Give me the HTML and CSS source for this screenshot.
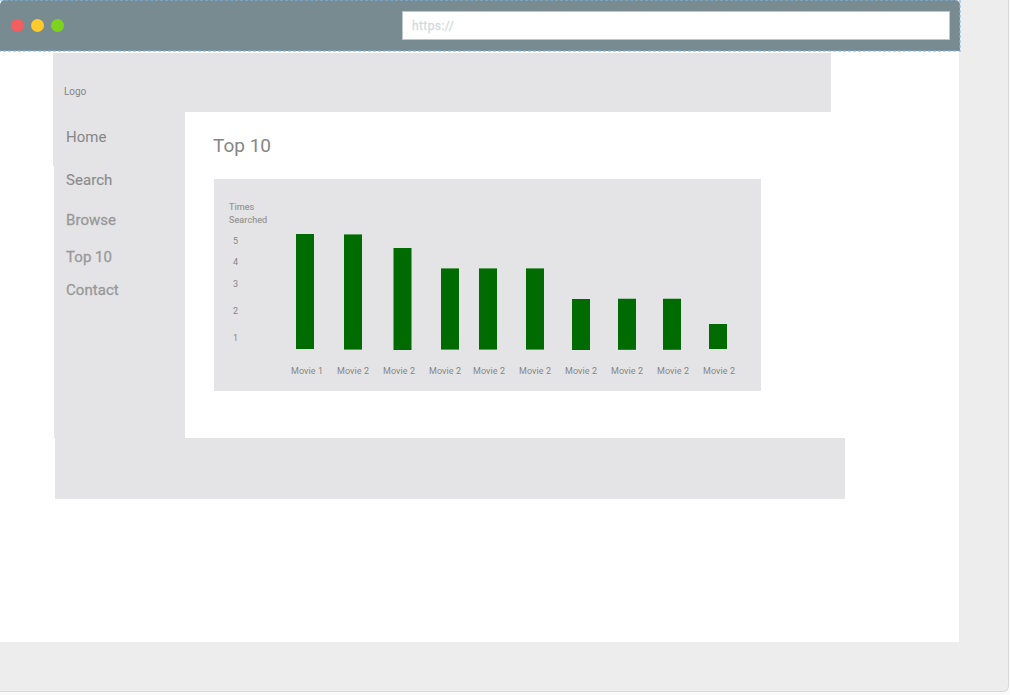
FILE: index.html
```html
<!DOCTYPE html>
<html lang="en">
<head>
<meta charset="utf-8">
<title>Top 10</title>
<link rel="stylesheet" href="styles.css">
</head>
<body>
<div class="canvas">
  <div class="page">
    <header class="browser">
      <div class="lights"><i class="red"></i><i class="yellow"></i><i class="green"></i></div>
      <div class="address">https://</div>
      <svg class="selection" width="962" height="52" viewBox="0 0 962 52"><path d="M0 0H960V51H0"/></svg>
    </header>
    <div class="site">
      <div class="banner"><span class="logo">Logo</span></div>
      <div class="middle">
        <nav class="sidebar">
          <a class="home">Home</a>
          <a class="search">Search</a>
          <a class="browse">Browse</a>
          <a class="top">Top 10</a>
          <a class="contact">Contact</a>
        </nav>
        <main class="content">
          <h1>Top 10</h1>
          <section class="chart">
            <div class="axis">
              <div class="caption">Times<br>Searched</div>
              <span class="n5">5</span><span class="n4">4</span><span class="n3">3</span><span class="n2">2</span><span class="n1">1</span>
            </div>
            <div class="plot">
              <div class="bars">
                <b class="b1"></b><b class="b2 soft"></b><b class="b3"></b><b class="b4 soft"></b><b class="b5 soft"></b><b class="b6 soft"></b><b class="b7"></b><b class="b8 faint"></b><b class="b9 faint"></b><b class="b10"></b>
              </div>
              <div class="labels">
                <span class="first">Movie 1</span><span>Movie 2</span><span>Movie 2</span><span class="narrow">Movie 2</span><span>Movie 2</span><span>Movie 2</span><span>Movie 2</span><span>Movie 2</span><span>Movie 2</span><span>Movie 2</span>
              </div>
            </div>
          </section>
        </main>
      </div>
      <footer class="footer"></footer>
    </div>
  </div>
</div>
</body>
</html>
```
FILE: styles.css
```css
* { box-sizing: border-box; }
body { margin: 0; width: 1010px; height: 695px; overflow: hidden; background: #fafafa; font-family: Roboto, sans-serif; color: #868686; }
.canvas { width: 1009px; height: 692px; background: #ededed; border: solid #d8d8d8; border-width: 0 1px 1px 0; border-bottom-right-radius: 6px; }
.page { width: 959px; height: 642px; background: #fff; }
.browser { position: relative; width: 960px; height: 51px; display: flex; justify-content: space-between; padding: 11px 10px 0 11px; background: #788b90; border-radius: 5px 5px 0 0; }
.lights { display: flex; gap: 7px; padding-top: 8px; }
.lights i { width: 13px; height: 13px; border-radius: 50%; }
.red { background: #f45e5e; }
.yellow { background: #ffca2b; }
.green { background: #7ed321; }
.address { width: 548px; height: 29px; padding-left: 9px; border: 1px solid #bcc8cb; background: #fff; color: #d2dbde; font-size: 12px; line-height: 29px; letter-spacing: .4px; -webkit-text-stroke: .3px #d2dbde; }
.selection { position: absolute; left: 0; top: 0; fill: none; stroke: rgba(127, 184, 238, .55); stroke-width: 2; stroke-dasharray: 3 2; }
.site { padding: 2px 0 0 53px; }
.banner { width: 778px; height: 59px; padding: 32px 0 0 11px; background: #e4e4e6; }
.logo { display: block; font-size: 10px; line-height: 14px; letter-spacing: -.1px; }
.middle { display: flex; height: 326px; }
.sidebar { display: flex; flex-direction: column; width: 132px; padding: 15px 0 0 13px; background: linear-gradient(#e4e4e6, #e4e4e6) 1px 0 no-repeat, linear-gradient(#e4e4e6, #e4e4e6) 0 0 / 1px 54px no-repeat; font-size: 15px; line-height: 20px; letter-spacing: .05px; }
.search { margin-top: 23px; -webkit-text-stroke: .15px; color: #8c8c8c; }
.browse { margin-top: 20px; -webkit-text-stroke: .3px; color: #999; }
.top { margin-top: 17px; -webkit-text-stroke: .3px; color: #999; }
.contact { margin-top: 13px; -webkit-text-stroke: .3px; color: #999; }
.content { padding: 22px 0 0 28px; }
h1 { margin: 0; font-size: 19px; line-height: 24px; font-weight: 400; }
.chart { display: flex; width: 547px; height: 212px; margin: 21px 0 0 1px; background: #e4e4e6; font-size: 9px; }
.axis { display: flex; flex-direction: column; width: 77px; padding: 21px 0 0 15px; line-height: 13px; }
.caption { padding-top: 1px; letter-spacing: .1px; -webkit-text-stroke: .15px; color: #949494; }
.axis span { padding-left: 4px; }
.n5 { margin-top: 8px; }
.n4 { margin-top: 8px; }
.n3 { margin-top: 9px; }
.n2 { margin-top: 14px; }
.n1 { margin-top: 14px; }
.plot { padding-top: 55px; }
.bars { display: flex; align-items: flex-start; height: 131px; padding-left: 5px; }
.bars b { flex: none; width: 18px; background: #006b00; }
.b1 { height: 115px; }
.b2 { height: 116px; margin-left: 30px; }
.bars .b3 { height: 102px; width: 19px; margin: 14px 0 0 31px; border: solid #6da96e; border-width: 0 1px; }
.b4 { height: 82px; margin: 34px 0 0 29px; }
.b5 { height: 82px; margin: 34px 0 0 20px; }
.b6 { height: 82px; margin: 34px 0 0 29px; }
.b7 { height: 51px; margin: 65px 0 0 28px; }
.b8 { height: 52px; margin: 64px 0 0 28px; }
.b9 { height: 52px; margin: 64px 0 0 27px; }
.b10 { height: 25px; margin: 90px 0 0 28px; }
.soft { border: solid #5b9d5b; border-width: 1px 0; }
.faint { border: solid; border-width: 1px 0; border-color: #a6c7a7 transparent #2a812b; }
.labels { display: flex; line-height: 13px; letter-spacing: .1px; }
.labels span { flex: none; width: 46px; white-space: nowrap; }
.labels .narrow { width: 44px; }
.footer { width: 790px; height: 61px; margin-left: 2px; background: #e4e4e6; }
```
